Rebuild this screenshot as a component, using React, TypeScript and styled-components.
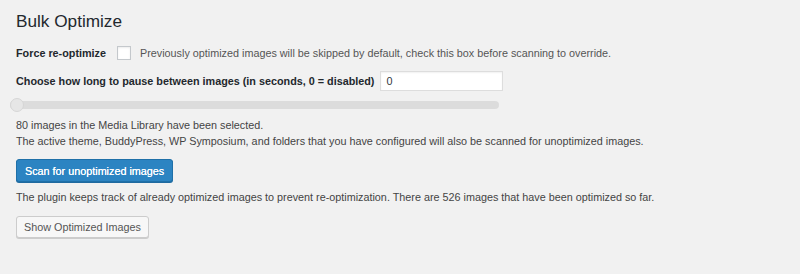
import styled, { createGlobalStyle } from "styled-components";

const Global = createGlobalStyle`
  body {
    margin: 0;
    background: #f1f1f1;
    font-family: "Liberation Sans", Arial, sans-serif;
    color: #444;
  }
`

const Wrap = styled.div`
  display: flex;
  flex-direction: column;
  align-items: flex-start;
  padding: 10px 16px 30px 16px;
  width: 800px;
  height: 274px;
  box-sizing: border-box;
`

const Title = styled.h2`
  margin: 0;
  font-size: 17.2px;
  line-height: 22px;
  font-weight: 400;
  color: #23282d;
`

const Row = styled.div<{ $top: number; $h: number }>`
  display: flex;
  align-items: center;
  height: ${p => p.$h}px;
  margin-top: ${p => p.$top}px;
  font-size: 10.8px;
`

const Label = styled.label<{ $gap: number }>`
  font-weight: 700;
  color: #23282d;
  margin-right: ${p => p.$gap}px;
`

const Check = styled.span`
  width: 12px;
  height: 12px;
  background: #fff;
  border: 1px solid #c4c8cc;
  box-shadow: inset 0 1px 2px rgba(0, 0, 0, 0.08);
  margin-right: 9px;
`

const Hint = styled.span`
  color: #555;
`

const NumInput = styled.input`
  box-sizing: border-box;
  width: 123px;
  height: 20px;
  border: 1px solid #ddd;
  background: #fff;
  box-shadow: inset 0 1px 2px rgba(0, 0, 0, 0.06);
  padding: 0 5px;
  font: inherit;
  font-size: 10.8px;
  color: #32373c;
  outline: none;
`

const Range = styled.input`
  -webkit-appearance: none;
  appearance: none;
  margin: 7px 0 0 -6px;
  width: 489px;
  height: 14px;
  background: transparent;
  &::-webkit-slider-runnable-track {
    height: 8px;
    border-radius: 4px;
    background: #dcdcdc;
  }
  &::-webkit-slider-thumb {
    -webkit-appearance: none;
    width: 14px;
    height: 14px;
    margin-top: -3px;
    border-radius: 50%;
    background: #e6e6e6;
    border: 1px solid #d6d6d6;
    box-sizing: border-box;
  }
`

const Text = styled.p<{ $top: number }>`
  margin: ${p => p.$top}px 0 0;
  font-size: 10.8px;
  line-height: 15.5px;
`

const Button = styled.button<{ $primary?: boolean; $top: number }>`
  margin-top: ${p => p.$top}px;
  height: ${p => (p.$primary ? 23 : 22)}px;
  padding: 0 ${p => (p.$primary ? 8 : 7)}px;
  border-radius: 3px;
  font-family: inherit;
  font-size: 10.8px;
  cursor: pointer;
  background: ${p => (p.$primary ? "#2c84c2" : "#f7f7f7")};
  border: 1px solid ${p => (p.$primary ? "#1f70a8" : "#cccccc")};
  box-shadow: 0 1px 0 ${p => (p.$primary ? "#1f6aa0" : "#cccccc")};
  color: ${p => (p.$primary ? "#fff" : "#555")};
  text-shadow: ${p => (p.$primary ? "0 0 0.4px #fff" : "none")};
`

export default function App() {
  return (
    <>
      <Global />
      <Wrap>
        <Title>Bulk Optimize</Title>
        <Row $top={11} $h={19}>
          <Label $gap={11}>Force re-optimize</Label>
          <Check />
          <Hint>Previously optimized images will be skipped by default, check this box before scanning to override.</Hint>
        </Row>
        <Row $top={9} $h={20}>
          <Label $gap={6}>Choose how long to pause between images (in seconds, 0 = disabled)</Label>
          <NumInput defaultValue="0" />
        </Row>
        <Range type="range" min={0} max={30} defaultValue={0} />
        <Text $top={6}>
          80 images in the Media Library have been selected.
          <br />
          The active theme, BuddyPress, WP Symposium, and folders that you have configured will also be scanned for unoptimized images.
        </Text>
        <Button $primary $top={10}>Scan for unoptimized images</Button>
        <Text $top={8}>
          The plugin keeps track of already optimized images to prevent re-optimization. There are 526 images that have been optimized so far.
        </Text>
        <Button $top={10}>Show Optimized Images</Button>
      </Wrap>
    </>
  )
}
